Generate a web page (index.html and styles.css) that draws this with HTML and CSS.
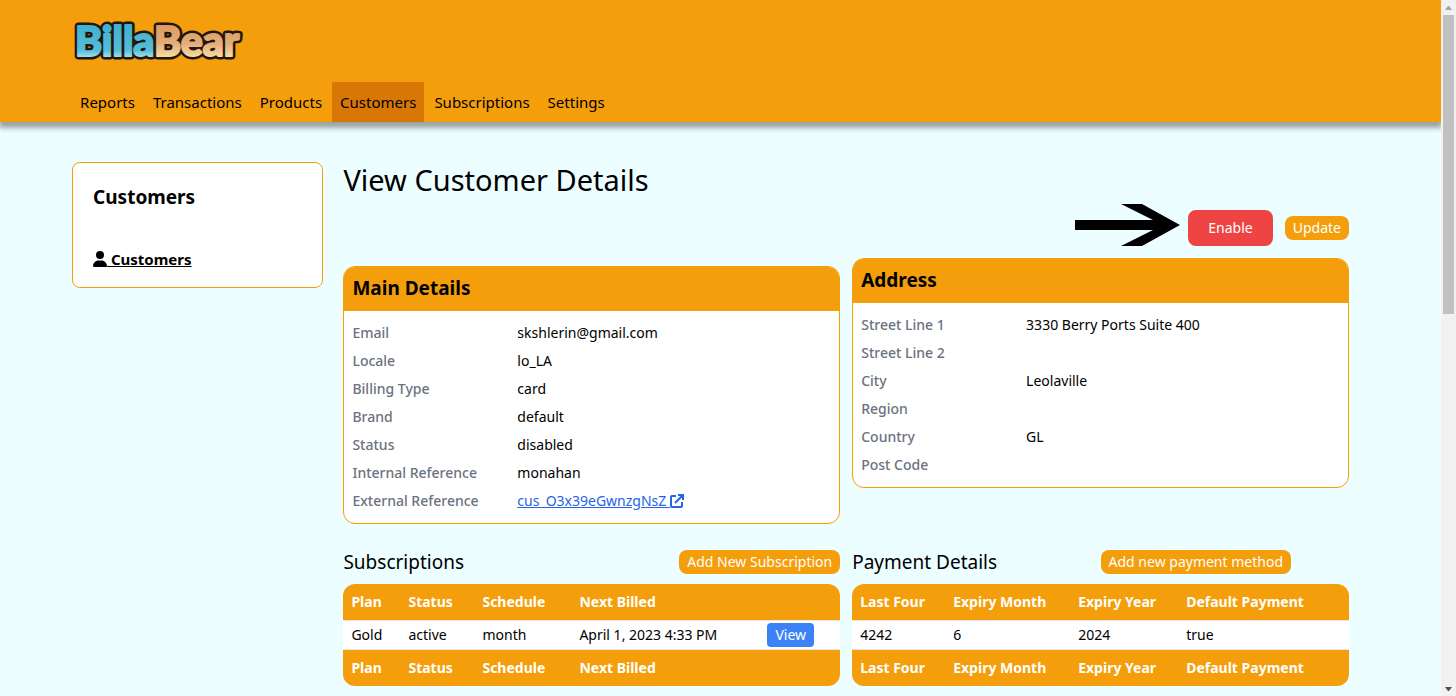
FILE: index.html
```html
<!DOCTYPE html>
<html lang="en">
<head>
    <meta charset="UTF-8">
    <meta name="viewport" content="width=device-width, initial-scale=1.0">
    <title>BillaBear - Customer</title>
    <link rel="stylesheet" href="styles.css">
</head>
<body>
    <header class="top-bar">
        <a href="#" class="logo" aria-label="BillaBear">
            <svg width="180" height="82" viewBox="0 0 180 82">
                <defs>
                    <linearGradient id="blue" x1="0" y1="24" x2="0" y2="57" gradientUnits="userSpaceOnUse">
                        <stop offset="0" stop-color="#3fb0cd"/>
                        <stop offset="0.8" stop-color="#56bdd8"/>
                        <stop offset="1" stop-color="#9fe0ec"/>
                    </linearGradient>
                    <linearGradient id="brown" x1="0" y1="24" x2="0" y2="57" gradientUnits="userSpaceOnUse">
                        <stop offset="0" stop-color="#dd9a62"/>
                        <stop offset="0.6" stop-color="#e3ad78"/>
                        <stop offset="1" stop-color="#f8dda6"/>
                    </linearGradient>
                    <text id="logoText" x="3" y="56"><tspan>Billa</tspan><tspan>Bear</tspan></text>
                </defs>
                <g class="logo-text">
                    <!-- dark outline first, coloured letters on top -->
                    <use href="#logoText" class="outline"/>
                    <text x="3" y="56"><tspan class="billa">Billa</tspan><tspan class="bear">Bear</tspan></text>
                </g>
            </svg>
        </a>
        <nav class="menu">
            <a href="#">Reports</a>
            <a href="#">Transactions</a>
            <a href="#">Products</a>
            <a href="#" class="active">Customers</a>
            <a href="#">Subscriptions</a>
            <a href="#">Settings</a>
        </nav>
    </header>

    <div class="content">
        <aside class="sidebar">
            <h2>Customers</h2>
            <a href="#">
                <svg width="14" height="16" viewBox="0 0 448 512"><path d="M224 256A128 128 0 1 0 224 0a128 128 0 1 0 0 256zm-45.7 48C79.800 304 0 383.800 0 482.300C0 498.700 13.300 512 29.700 512H418.300c16.400 0 29.700-13.300 29.700-29.700C448 383.800 368.200 304 269.700 304H178.300z"/></svg>
                Customers
            </a>
        </aside>

        <main>
            <h1>View Customer Details</h1>
            <div class="actions">
                <svg class="arrow" width="106" height="42" viewBox="0 0 106 42"><path d="M0 16H78L46 0H67L105 21L67 42H46L78 26H0Z"/></svg>
                <button class="btn btn-danger">Enable</button>
                <button class="btn">Update</button>
            </div>

            <div class="columns">
                <section class="card card-main">
                    <h2>Main Details</h2>
                    <dl>
                        <div><dt>Email</dt><dd>skshlerin@gmail.com</dd></div>
                        <div><dt>Locale</dt><dd>lo_LA</dd></div>
                        <div><dt>Billing Type</dt><dd>card</dd></div>
                        <div><dt>Brand</dt><dd>default</dd></div>
                        <div><dt>Status</dt><dd>disabled</dd></div>
                        <div><dt>Internal Reference</dt><dd>monahan</dd></div>
                        <div>
                            <dt>External Reference</dt>
                            <dd><a href="#">cus_O3x39eGwnzgNsZ <svg width="14" height="14" viewBox="0 0 14 14"><path d="M6 2H2Q1 2 1 3V12Q1 13 2 13H11Q12 13 12 12V8M5 9L12 2M8 1H13V6"/></svg></a></dd>
                        </div>
                    </dl>
                </section>

                <section class="card">
                    <h2>Address</h2>
                    <dl>
                        <div><dt>Street Line 1</dt><dd>3330 Berry Ports Suite 400</dd></div>
                        <div><dt>Street Line 2</dt><dd></dd></div>
                        <div><dt>City</dt><dd>Leolaville</dd></div>
                        <div><dt>Region</dt><dd></dd></div>
                        <div><dt>Country</dt><dd>GL</dd></div>
                        <div><dt>Post Code</dt><dd></dd></div>
                    </dl>
                </section>

                <section>
                    <div class="list-header">
                        <h2>Subscriptions</h2>
                        <button class="btn">Add New Subscription</button>
                    </div>
                    <table class="list subscriptions">
                        <thead>
                            <tr><th>Plan</th><th>Status</th><th>Schedule</th><th>Next Billed</th><th></th></tr>
                        </thead>
                        <tbody>
                            <tr><td>Gold</td><td>active</td><td>month</td><td>April 1, 2023 4:33 PM</td><td class="view"><button class="btn btn-view">View</button></td></tr>
                        </tbody>
                        <tfoot>
                            <tr><th>Plan</th><th>Status</th><th>Schedule</th><th>Next Billed</th><th></th></tr>
                        </tfoot>
                    </table>
                </section>

                <section>
                    <div class="list-header halves">
                        <h2>Payment Details</h2>
                        <button class="btn">Add new payment method</button>
                    </div>
                    <table class="list payments">
                        <thead>
                            <tr><th>Last Four</th><th>Expiry Month</th><th>Expiry Year</th><th>Default Payment</th></tr>
                        </thead>
                        <tbody>
                            <tr><td>4242</td><td>6</td><td>2024</td><td>true</td></tr>
                        </tbody>
                        <tfoot>
                            <tr><th>Last Four</th><th>Expiry Month</th><th>Expiry Year</th><th>Default Payment</th></tr>
                        </tfoot>
                    </table>
                </section>
            </div>
        </main>
    </div>

    <div class="scrollbar">
        <svg width="15" height="15" viewBox="0 0 15 15"><path d="M4 10H11L8 6H7Z" fill="#a3a3a3"/></svg>
        <div class="thumb"></div>
        <svg width="15" height="15" viewBox="0 0 15 15"><path d="M4 6H11L8 10H7Z" fill="#505050"/></svg>
    </div>
</body>
</html>
```
FILE: styles.css
```css
* {
    box-sizing: border-box;
    margin: 0;
    padding: 0;
}
body {
    min-height: 100vh;
    padding-right: 15px; /* room for the scrollbar */
    background-color: #ecfeff;
    color: #000;
    font-family: "Noto Sans", sans-serif;
    font-size: 14px;
    line-height: 20px;
}
.top-bar {
    padding: 0 5%;
    background-color: #f59e0b;
    box-shadow: 0 5px 5px 1px #9ca3a3;
}
.logo {
    display: block;
}
.logo svg {
    display: block;
}
.logo-text {
    font-family: Lato, sans-serif;
    font-size: 41px;
    font-weight: 900;
    stroke-width: 2px;
    stroke-linejoin: round;
}
.outline {
    stroke: #22160f;
    stroke-width: 7px;
}
.billa {
    fill: url(#blue);
    stroke: url(#blue);
}
.bear {
    fill: url(#brown);
    stroke: url(#brown);
}
.menu {
    display: flex;
    gap: 2px;
}
.menu a {
    padding: 8px;
    color: #000;
    font-size: 15px;
    line-height: 24px;
    text-decoration: none;
}
.menu .active {
    background-color: #d97706;
}
.content {
    display: grid;
    grid-template-columns: 1fr 4fr;
    gap: 20px;
    align-items: start;
    margin: 40px 5% 0;
    padding-right: 20px;
}
.sidebar {
    padding: 20px;
    border: 1px solid #f59e0b;
    border-radius: 8px;
    background-color: #fff;
}
.sidebar h2 {
    margin-bottom: 40px;
    font-size: 19px;
    line-height: 28px;
}
.sidebar a {
    display: block;
    color: #000;
    font-size: 15px;
    font-weight: bold;
    line-height: 16px;
}
.sidebar svg {
    vertical-align: -2px;
}
h1 {
    font-size: 29px;
    font-weight: normal;
    line-height: 36px;
}
.actions {
    display: flex;
    justify-content: flex-end;
    align-items: center;
    gap: 12px;
    height: 36px;
    margin: 12px 0;
}
.arrow {
    margin-right: -5px;
    margin-top: -6px;
}
.btn {
    height: 24px;
    padding: 0 8px;
    border: none;
    border-radius: 8px;
    background-color: #f59e0b;
    color: #fff;
    font-family: inherit;
    font-size: 14px;
    line-height: 24px;
}
.btn-danger {
    height: 36px;
    padding: 0 20px;
    background-color: #ef4444;
}
.btn-view {
    border-radius: 4px;
    background-color: #3b82f6;
}
.columns {
    display: grid;
    grid-template-columns: 1fr 1fr;
    gap: 24px 12px;
    align-items: start;
}
.card {
    overflow: hidden;
    border: 1px solid #f59e0b;
    border-radius: 12px;
    background-color: #fff;
}
.card-main {
    margin-top: 8px;
}
.card h2 {
    padding: 7px 8px 9px;
    background-color: #f59e0b;
    font-size: 19px;
    line-height: 28px;
}
.card dl {
    padding: 8px 0;
}
.card dl div {
    display: grid;
    grid-template-columns: 1fr 2fr;
    height: 28px;
}
.card dt,
.card dd {
    padding: 4px 8px;
}
.card dt {
    color: #6b7280;
    font-weight: 500;
}
.card dd a {
    color: #2563eb;
}
.card dd svg {
    fill: none;
    stroke: #2563eb;
    stroke-width: 2;
    vertical-align: -2px;
}
.list-header {
    display: flex;
    justify-content: space-between;
    align-items: center;
    height: 28px;
    margin-bottom: 8px;
}
.list-header h2 {
    font-size: 19px;
    font-weight: normal;
    line-height: 28px;
}
.halves {
    display: grid;
    grid-template-columns: 1fr 1fr;
}
.halves .btn {
    justify-self: start;
}
.list {
    width: 100%;
    overflow: hidden;
    border-radius: 12px;
    border-spacing: 0;
    table-layout: fixed;
    background-color: #fff;
}
.list th,
.list td {
    padding: 0 8px;
    text-align: left;
    white-space: nowrap;
}
.list th {
    height: 36px;
    background-color: #f59e0b;
    color: #fff;
}
.list td {
    height: 30px;
    border-top: 1px solid #e5e7eb;
    border-bottom: 1px solid #e5e7eb;
}
.list .view {
    line-height: 0;
}
.subscriptions th:nth-child(1) {
    width: 57px;
}
.subscriptions th:nth-child(2) {
    width: 74px;
}
.subscriptions th:nth-child(3) {
    width: 97px;
}
.subscriptions th:nth-child(4) {
    width: 188px;
}
.payments th:nth-child(1) {
    width: 93px;
}
.payments th:nth-child(2) {
    width: 125px;
}
.payments th:nth-child(3) {
    width: 108px;
}
.scrollbar {
    position: fixed;
    top: 0;
    right: 0;
    bottom: 0;
    display: flex;
    flex-direction: column;
    width: 15px;
    background-color: #f1f1f1;
}
.scrollbar svg {
    flex: none;
}
.thumb {
    height: 43%;
    margin: 0 2px auto;
    background-color: #c1c1c1;
}
```
